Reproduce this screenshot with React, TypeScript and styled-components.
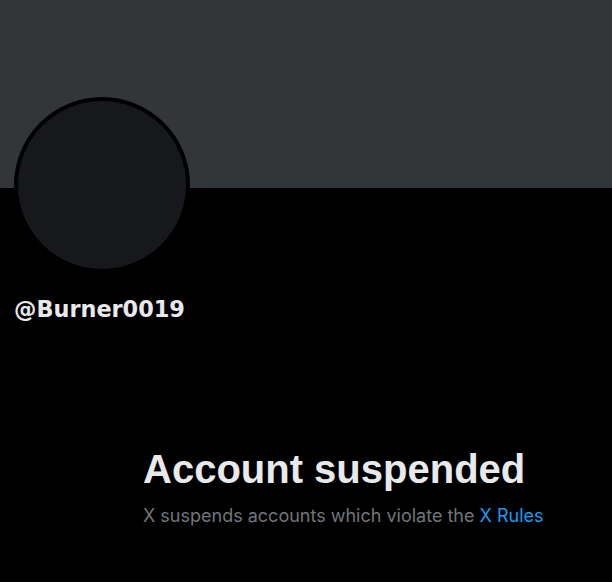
import React from "react";
import styled, { createGlobalStyle } from "styled-components";

const Global = createGlobalStyle`
  html, body { margin: 0; padding: 0; background: #000; }
  body { width: 612px; height: 582px; overflow: hidden; }
`;

const Page = styled.div`
  width: 612px;
  height: 582px;
  background: #000;
  display: flex;
  flex-direction: column;
`;

const Banner = styled.div`
  height: 188px;
  background: #333639;
  flex-shrink: 0;
`;

const Profile = styled.div`
  padding-left: 14px;
  display: flex;
  flex-direction: column;
  align-items: flex-start;
`;

const Avatar = styled.div`
  width: 168px;
  height: 168px;
  margin-top: -91px;
  border-radius: 50%;
  border: 4px solid #000;
  background: #16181c;
`;

const Handle = styled.div`
  margin-top: 22px;
  font-family: "DejaVu Sans", sans-serif;
  font-weight: 700;
  font-size: 22.4px;
  line-height: 28px;
  color: #e7e9ea;
`;

const Empty = styled.div`
  margin-top: 123px;
  padding-left: 143px;
  display: flex;
  flex-direction: column;
`;

const Title = styled.h1`
  margin: 0;
  font-family: "Liberation Sans", Arial, sans-serif;
  font-weight: 700;
  font-size: 40px;
  line-height: 46px;
  color: #e7e9ea;
`;

const Sub = styled.p`
  margin: 12px 0 0;
  font-family: Inter, "Liberation Sans", sans-serif;
  font-size: 18px;
  line-height: 24px;
  color: #71767b;
`;

const Link = styled.a`
  color: #1d9bf0;
  text-decoration: none;
`;

export default function App() {
  return (
    <Page>
      <Global />
      <Banner />
      <Profile>
        <Avatar />
        <Handle>@Burner0019</Handle>
      </Profile>
      <Empty>
        <Title>Account suspended</Title>
        <Sub>
          X suspends accounts which violate the <Link href="#">X Rules</Link>
        </Sub>
      </Empty>
    </Page>
  );
}
